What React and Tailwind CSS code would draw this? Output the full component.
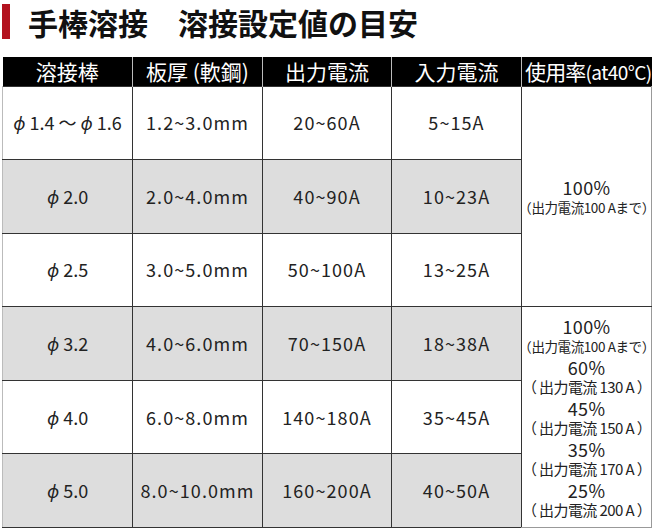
import React from "react";

const rows = [
  { rod: ["1.4", "1.6"], plate: "1.2~3.0mm", out: "20~60A", inp: "5~15A", gray: false },
  { rod: ["2.0"], plate: "2.0~4.0mm", out: "40~90A", inp: "10~23A", gray: true },
  { rod: ["2.5"], plate: "3.0~5.0mm", out: "50~100A", inp: "13~25A", gray: false },
  { rod: ["3.2"], plate: "4.0~6.0mm", out: "70~150A", inp: "18~38A", gray: true },
  { rod: ["4.0"], plate: "6.0~8.0mm", out: "140~180A", inp: "35~45A", gray: false },
  { rod: ["5.0"], plate: "8.0~10.0mm", out: "160~200A", inp: "40~50A", gray: true },
];

const duty = [
  ["100%", "（出力電流100 Aまで）"],
  ["60%", "（ 出力電流 130 A ）"],
  ["45%", "（ 出力電流 150 A ）"],
  ["35%", "（ 出力電流 170 A ）"],
  ["25%", "（ 出力電流 200 A ）"],
];

function Phi({ v }) {
  return (
    <span>
      <span className="italic">ϕ</span> {v}
    </span>
  );
}

function Duty({ pct, note }) {
  const first = note.includes("まで");
  return (
    <div className="flex flex-col items-center">
      <span className="block text-[18px] leading-[21px] tracking-[0.02em]">{pct}</span>
      <span
        className={`block ${first ? "text-[13.5px] tracking-[-0.03em]" : "text-[15px] tracking-[-0.04em]"} leading-[18px] whitespace-nowrap`}
      >
        {note}
      </span>
    </div>
  );
}

export default function App() {
  const cell = "border border-[#333] text-center align-middle text-[18px] tracking-[0.06em] text-[#222] whitespace-nowrap";
  return (
    <div
      className="w-[654px] h-[530px] bg-white overflow-hidden"
      style={{ fontFamily: '"Noto Sans CJK JP", "Noto Sans", sans-serif' }}
    >
      {/* title */}
      <div className="flex items-center h-[42px] pl-[2px] pt-[1px]">
        <div className="w-[8px] h-[35px] bg-[#b3121f]"></div>
        <h1 className="ml-[18px] text-[30px] font-bold text-[#111] leading-none whitespace-pre">
          手棒溶接　溶接設定値の目安
        </h1>
      </div>

      <table className="ml-[2px] mt-[15px] border-collapse table-fixed w-[649px]">
        <colgroup>
          <col className="w-[130px]" />
          <col className="w-[130px]" />
          <col className="w-[129px]" />
          <col className="w-[130px]" />
          <col className="w-[130px]" />
        </colgroup>
        <thead>
          <tr className="h-[29px] bg-black text-white text-[21px]">
            <th className="font-normal border-r border-[#bbb] leading-none">溶接棒</th>
            <th className="font-normal border-r border-[#bbb] leading-none whitespace-nowrap">板厚 (軟鋼)</th>
            <th className="font-normal border-r border-[#bbb] leading-none">出力電流</th>
            <th className="font-normal border-r border-[#bbb] leading-none">入力電流</th>
            <th className="font-normal leading-none whitespace-nowrap text-left pl-[3px] tracking-[-0.04em]">
              使用率<span className="text-[19px] tracking-[-0.03em]">(at40°C)</span>
            </th>
          </tr>
        </thead>
        <tbody>
          {rows.map((r, i) => (
            <tr key={i} className={`h-[73.6px] ${r.gray ? "bg-[#dddddd]" : "bg-white"}`}>
              <td className={`${cell} border-l-[#bbb] tracking-normal`}>
                {r.rod.length > 1 ? (
                  <>
                    <Phi v={r.rod[0]} /> 〜 <Phi v={r.rod[1]} />
                  </>
                ) : (
                  <Phi v={r.rod[0]} />
                )}
              </td>
              <td className={cell}>{r.plate}</td>
              <td className={cell}>{r.out}</td>
              <td className={cell}>{r.inp}</td>
              {i === 0 && (
                <td rowSpan={3} className={`${cell} tracking-normal bg-white border-r-[#999]`}>
                  <Duty pct="100%" note="（出力電流100 Aまで）" />
                </td>
              )}
              {i === 3 && (
                <td rowSpan={3} className={`${cell} tracking-normal bg-white border-r-[#999] border-b-[#999]`}>
                  <div className="flex flex-col gap-[2px] items-center">
                    {duty.map(([p, n]) => (
                      <Duty key={p} pct={p} note={n} />
                    ))}
                  </div>
                </td>
              )}
            </tr>
          ))}
        </tbody>
      </table>
    </div>
  );
}
